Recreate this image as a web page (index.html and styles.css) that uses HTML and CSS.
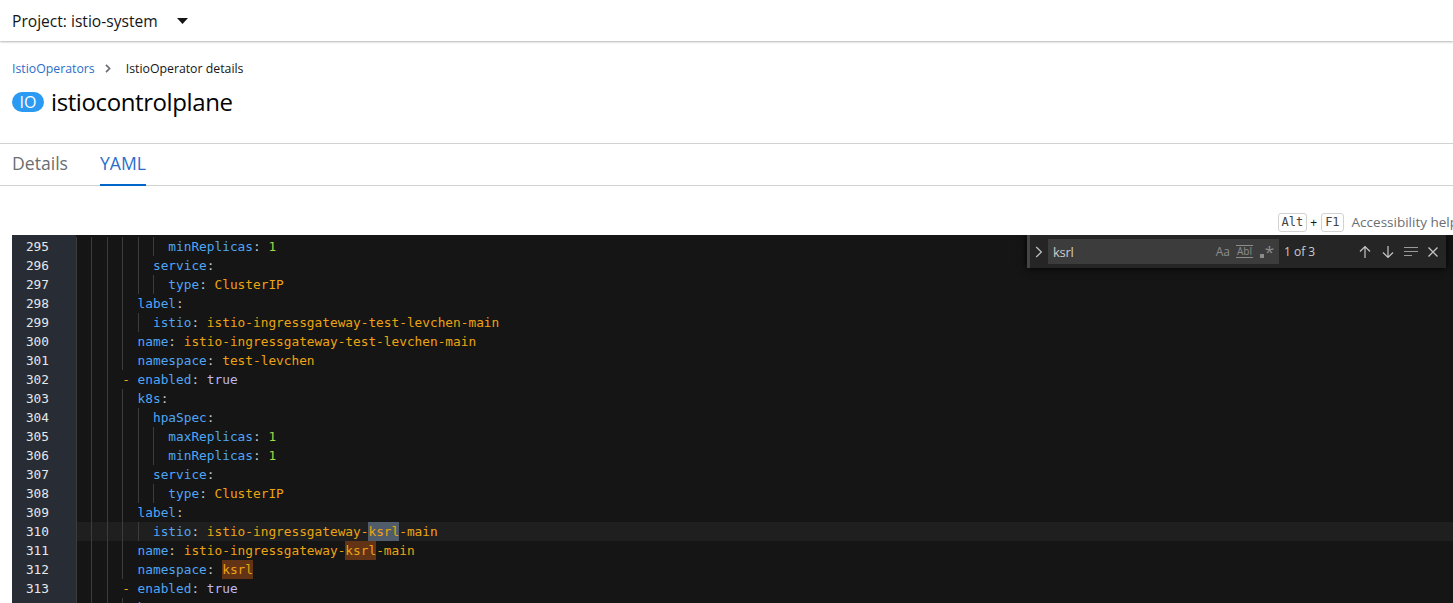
FILE: index.html
```html
<!DOCTYPE html>
<html lang="en">
<head>
<meta charset="utf-8">
<title>istiocontrolplane</title>
<link rel="stylesheet" href="styles.css">
</head>
<body>
<header class="topbar">
  <span class="project">Project: istio-system</span>
  <svg class="caret" width="11" height="6" viewBox="0 0 11 6"><path d="M0 0h11L5.5 6z" fill="#151515"/></svg>
</header>
<section class="head">
  <nav class="crumbs">
    <a class="crumb-link">IstioOperators</a>
    <svg class="crumb-sep" width="6" height="9" viewBox="0 0 6 9"><path d="M1 .8 4.6 4.5 1 8.2" fill="none" stroke="#6a6e73" stroke-width="1.7"/></svg>
    <span class="crumb-cur">IstioOperator details</span>
  </nav>
  <div class="title-row">
    <span class="badge">IO</span>
    <h1 class="title">istiocontrolplane</h1>
  </div>
</section>
<nav class="tabs">
  <span class="tab">Details</span>
  <span class="tab tab-on">YAML</span>
</nav>
<div class="hint">
  <kbd class="key">Alt</kbd><span class="plus">+</span><kbd class="key">F1</kbd><span class="hint-text">Accessibility help</span>
</div>
<main class="editor">
  <div class="gutter">
    <div class="num">295</div><div class="num">296</div><div class="num">297</div><div class="num">298</div><div class="num">299</div>
    <div class="num">300</div><div class="num">301</div><div class="num">302</div><div class="num">303</div><div class="num">304</div>
    <div class="num">305</div><div class="num">306</div><div class="num">307</div><div class="num">308</div><div class="num">309</div>
    <div class="num">310</div><div class="num">311</div><div class="num">312</div><div class="num">313</div><div class="num">314</div>
  </div>
  <div class="code">
    <div class="ln"><i class="g"></i><i class="g"></i><i class="g"></i><i class="g"></i><i class="g"></i><i class="g"></i><b class="k">minReplicas</b><b class="p">: </b><b class="n">1</b></div>
    <div class="ln"><i class="g"></i><i class="g"></i><i class="g"></i><i class="g"></i><i class="g"></i><b class="k">service</b><b class="p">:</b></div>
    <div class="ln"><i class="g"></i><i class="g"></i><i class="g"></i><i class="g"></i><i class="g"></i><i class="g"></i><b class="k">type</b><b class="p">: </b><b class="s">ClusterIP</b></div>
    <div class="ln"><i class="g"></i><i class="g"></i><i class="g"></i><i class="g"></i><b class="k">label</b><b class="p">:</b></div>
    <div class="ln"><i class="g"></i><i class="g"></i><i class="g"></i><i class="g"></i><i class="g"></i><b class="k">istio</b><b class="p">: </b><b class="s">istio-ingressgateway-test-levchen-main</b></div>
    <div class="ln"><i class="g"></i><i class="g"></i><i class="g"></i><i class="g"></i><b class="k">name</b><b class="p">: </b><b class="s">istio-ingressgateway-test-levchen-main</b></div>
    <div class="ln"><i class="g"></i><i class="g"></i><i class="g"></i><i class="g"></i><b class="k">namespace</b><b class="p">: </b><b class="s">test-levchen</b></div>
    <div class="ln"><i class="g"></i><i class="g"></i><i class="g"></i><b class="d">- </b><b class="k">enabled</b><b class="p">: </b><b class="t">true</b></div>
    <div class="ln"><i class="g"></i><i class="g"></i><i class="g"></i><i class="g"></i><b class="k">k8s</b><b class="p">:</b></div>
    <div class="ln"><i class="g"></i><i class="g"></i><i class="g"></i><i class="g"></i><i class="g"></i><b class="k">hpaSpec</b><b class="p">:</b></div>
    <div class="ln"><i class="g"></i><i class="g"></i><i class="g"></i><i class="g"></i><i class="g"></i><i class="g"></i><b class="k">maxReplicas</b><b class="p">: </b><b class="n">1</b></div>
    <div class="ln"><i class="g"></i><i class="g"></i><i class="g"></i><i class="g"></i><i class="g"></i><i class="g"></i><b class="k">minReplicas</b><b class="p">: </b><b class="n">1</b></div>
    <div class="ln"><i class="g"></i><i class="g"></i><i class="g"></i><i class="g"></i><i class="g"></i><b class="k">service</b><b class="p">:</b></div>
    <div class="ln"><i class="g"></i><i class="g"></i><i class="g"></i><i class="g"></i><i class="g"></i><i class="g"></i><b class="k">type</b><b class="p">: </b><b class="s">ClusterIP</b></div>
    <div class="ln"><i class="g"></i><i class="g"></i><i class="g"></i><i class="g"></i><b class="k">label</b><b class="p">:</b></div>
    <div class="ln ln-cur"><i class="g"></i><i class="g"></i><i class="g"></i><i class="g"></i><i class="g"></i><b class="k">istio</b><b class="p">: </b><b class="s">istio-ingressgateway-<mark class="hit-cur">ksrl</mark>-main</b></div>
    <div class="ln"><i class="g"></i><i class="g"></i><i class="g"></i><i class="g"></i><b class="k">name</b><b class="p">: </b><b class="s">istio-ingressgateway-<mark class="hit">ksrl</mark>-main</b></div>
    <div class="ln"><i class="g"></i><i class="g"></i><i class="g"></i><i class="g"></i><b class="k">namespace</b><b class="p">: </b><b class="s"><mark class="hit">ksrl</mark></b></div>
    <div class="ln"><i class="g"></i><i class="g"></i><i class="g"></i><b class="d">- </b><b class="k">enabled</b><b class="p">: </b><b class="t">true</b></div>
    <div class="ln"><i class="g"></i><i class="g"></i><i class="g"></i><i class="g"></i><b class="k">k8s</b><b class="p">:</b></div>
  </div>
  <div class="find">
    <svg class="find-toggle" width="8" height="12" viewBox="0 0 8 12"><path d="M1.2 1 6.4 6 1.2 11" fill="none" stroke="#c5c5c5" stroke-width="1.2"/></svg>
    <div class="find-input">
      <span class="find-value">ksrl</span>
      <span class="opt opt-aa">Aa</span>
      <span class="opt opt-ab">Abl</span>
      <span class="opt opt-re"><i class="re-dot"></i><span class="re-star">*</span></span>
    </div>
    <span class="find-count">1 of 3</span>
    <div class="find-actions">
      <svg width="16" height="16" viewBox="0 0 16 16"><path d="M8 14V2.5M3 7.5l5-5 5 5" fill="none" stroke="#c5c5c5" stroke-width="1.2"/></svg>
      <svg width="16" height="16" viewBox="0 0 16 16"><path d="M8 2v11.5M3 8.5l5 5 5-5" fill="none" stroke="#c5c5c5" stroke-width="1.2"/></svg>
      <svg width="16" height="16" viewBox="0 0 16 16"><path d="M1 3.5h14M1 7.5h14M1 11.5h8" fill="none" stroke="#9a9a9a" stroke-width="1"/></svg>
      <svg class="find-close" width="16" height="16" viewBox="0 0 16 16"><path d="M3.5 3.5l9 9M12.5 3.5l-9 9" fill="none" stroke="#c5c5c5" stroke-width="1.3"/></svg>
    </div>
  </div>
</main>
</body>
</html>
```
FILE: styles.css
```css
* { box-sizing: border-box; }
html, body { height: 603px; overflow: hidden; }
body { margin: 0; background: #fff; color: #151515; font-family: "Open Sans", "Liberation Sans", sans-serif; display: flex; flex-direction: column; }

.topbar { flex: none; height: 41px; display: flex; align-items: center; padding: 0 12px; gap: 19px; background: #fff; box-shadow: 0 1px 2px rgba(3,3,3,.3); position: relative; }
.project { font-size: 15.6px; white-space: nowrap; }
.caret { display: block; }

.head { flex: none; height: 102px; padding: 19px 12px 0; }
.crumbs { display: flex; align-items: center; height: 16px; font-size: 12.3px; }
.crumb-link { color: #2b6ecb; }
.crumb-sep { margin: 0 15px 0 10px; }
.crumb-cur { color: #151515; }
.title-row { display: flex; align-items: center; gap: 7px; margin-top: 10px; height: 32px; }
.badge { width: 32px; height: 20px; border-radius: 10px; background: #2b9af3; color: #fff; font-size: 16px; display: flex; align-items: center; justify-content: center; }
.title { margin: 0; font-size: 24px; font-weight: 400; line-height: 32px; letter-spacing: -.4px; color: #030303; }

.tabs { flex: none; height: 43px; display: flex; gap: 32px; padding: 0 12px; border-top: 1px solid #d2d2d2; border-bottom: 1px solid #d2d2d2; }
.tab { font-size: 17.6px; color: #6a6e73; line-height: 39px; height: 42px; }
.tab-on { color: #2b6ecb; border-bottom: 2px solid #0066cc; }

.hint { flex: none; height: 49px; display: flex; justify-content: flex-end; align-items: flex-end; padding-bottom: 3px; margin-right: -5px; white-space: nowrap; font-size: 13.5px; color: #6a6e73; }
.key { height: 19px; padding: 0 3px; border: 1px solid #d2d2d2; border-radius: 3px; font: 12px/17px "DejaVu Sans Mono", monospace; color: #444; }
.plus { margin: 0 4px 0 3px; font-size: 12px; color: #151515; line-height: 19px; }
.hint-text { margin-left: 8px; line-height: 19px; }

.editor { flex: 1; min-height: 0; margin-left: 12px; display: flex; background: #151515; position: relative; overflow: hidden; font-family: "DejaVu Sans Mono", monospace; font-size: 12.79px; }
.gutter { flex: none; width: 64px; padding-top: 2px; background: #282d35; }
.num { height: 19px; line-height: 19px; width: 37px; text-align: right; color: #e6e8ea; }
.code { flex: 1; padding-top: 2px; }
.ln { height: 19px; line-height: 19px; display: flex; white-space: pre; }
.ln-cur { background: #1f1f1f; }
.g { flex: none; width: 15.4px; height: 19px; box-shadow: inset 1px 0 0 #3c3c3c; }
.ln b { font-weight: 400; }
.k { color: #4fa6f5; }
.p { color: #c8c8c8; }
.s { color: #eca412; }
.n { color: #a4d845; }
.t { color: #bdb9ef; }
.d { color: #eca412; }
mark { color: inherit; display: inline-block; height: 19px; }
.hit { background: #623315; }
.hit-cur { background: #515c6a; }

.find { position: absolute; top: 0; right: 7px; width: 419px; height: 33px; display: flex; align-items: center; background: #252526; border-left: 3px solid #454545; box-shadow: 0 0 8px #000; font-family: "Open Sans", "Liberation Sans", sans-serif; color: #ccc; }
.find-toggle { margin: 0 5px; flex: none; }
.find-input { flex: none; width: 231px; height: 25px; background: #3c3c3c; display: flex; align-items: center; padding: 0 5px; font-size: 13px; }
.find-value { flex: 1; color: #ccc; letter-spacing: -.3px; }
.opt { color: #8c8c8c; font-size: 11px; }
.opt-aa { margin-right: 6px; font-size: 12px; }
.opt-ab { margin-right: 7px; border-top: 1px solid #8c8c8c; border-bottom: 1px solid #8c8c8c; line-height: 11px; font-size: 10px; padding: 0 1px; }
.opt-re { display: flex; align-items: flex-end; width: 14px; height: 14px; }
.re-dot { width: 4px; height: 4px; background: #8c8c8c; margin-bottom: 1px; }
.re-star { font-size: 17px; line-height: 14px; height: 14px; margin-left: 1px; }
.find-count { margin-left: 5px; font-size: 12px; color: #ccc; white-space: nowrap; width: 73px; }
.find-actions { display: flex; gap: 7px; align-items: center; }
.find-actions svg { display: block; }
.find-close { margin-left: -1px; }
```
